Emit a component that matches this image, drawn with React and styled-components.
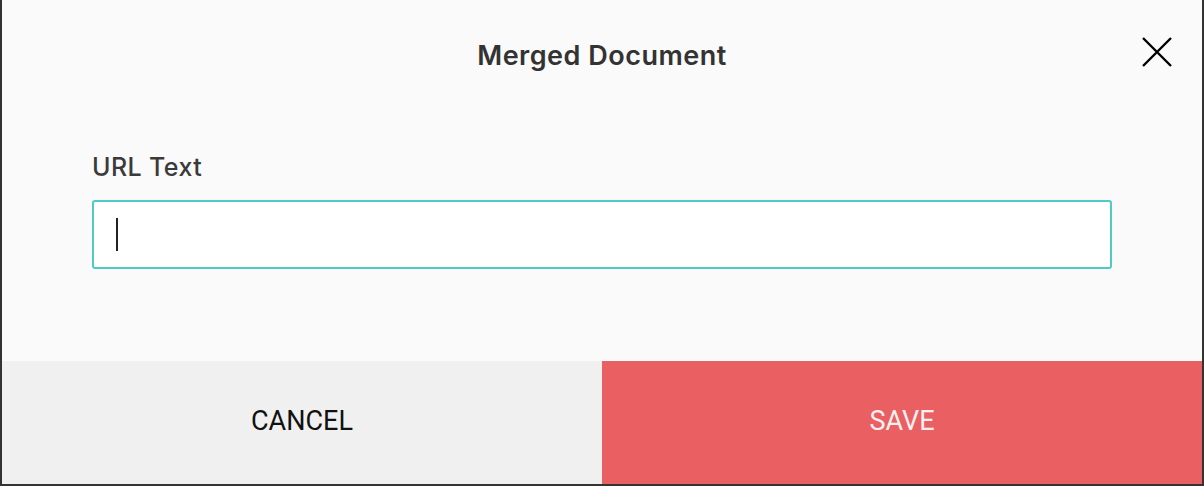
import React from "react";
import styled, { createGlobalStyle } from "styled-components";

const Global = createGlobalStyle`
  html, body { margin: 0; padding: 0; background: #333; }
  body { font-family: Inter, "Liberation Sans", sans-serif; }
  * { box-sizing: border-box; }
`;

const Frame = styled.div`
  width: 1204px;
  height: 486px;
  background: #333;
  padding: 0 2px 2px 2px;
  display: flex;
`;

const Dialog = styled.div`
  flex: 1;
  display: flex;
  flex-direction: column;
  background: #fafafa;
`;

const Header = styled.div`
  position: relative;
  height: 110px;
  display: flex;
  align-items: center;
  justify-content: center;
`;

const Title = styled.h1`
  margin: 0;
  font-size: 27px;
  font-weight: 600;
  color: #333;
  letter-spacing: 0.5px;
`;

const CloseButton = styled.button`
  position: absolute;
  right: 29px;
  top: 36px;
  width: 32px;
  height: 32px;
  padding: 0;
  border: none;
  background: transparent;
  display: flex;
  align-items: center;
  justify-content: center;
  cursor: pointer;
`;

const Body = styled.div`
  flex: 1;
  padding: 44px 90px 0 90px;
  display: flex;
  flex-direction: column;
`;

const Label = styled.label`
  font-size: 25px;
  font-weight: 500;
  color: #3a3a3a;
  letter-spacing: 0.4px;
  margin-bottom: 18px;
  line-height: 29px;
  margin-top: -1px;
`;

const InputBox = styled.div`
  height: 69px;
  border: 2px solid #4ecbc4;
  border-radius: 3px;
  background: #fff;
  display: flex;
  align-items: center;
  padding-left: 22px;
`;

const Caret = styled.span`
  width: 2px;
  height: 33px;
  background: #222;
`;

const Footer = styled.div`
  height: 123px;
  display: flex;
`;

const FooterButton = styled.button`
  flex: 1;
  border: none;
  margin: 0;
  background: ${(p) => (p.$primary ? "#e95f62" : "#f0f0f0")};
  color: ${(p) => (p.$primary ? "#f7f0f0" : "#111")};
  font-family: Roboto, "Liberation Sans", sans-serif;
  font-size: 27px;
  font-weight: 400;
  cursor: pointer;
  padding: 0 0 4px 0;
`;

export default function App() {
  return (
    <>
      <Global />
      <Frame>
        <Dialog>
          <Header>
            <Title>Merged Document</Title>
            <CloseButton aria-label="Close">
              <svg width="32" height="32" viewBox="0 0 32 32">
                <path d="M2 2 L30 30 M30 2 L2 30" stroke="#000" strokeWidth="2.4" fill="none" />
              </svg>
            </CloseButton>
          </Header>
          <Body>
            <Label>URL Text</Label>
            <InputBox>
              <Caret />
            </InputBox>
          </Body>
          <Footer>
            <FooterButton>CANCEL</FooterButton>
            <FooterButton $primary>SAVE</FooterButton>
          </Footer>
        </Dialog>
      </Frame>
    </>
  );
}
